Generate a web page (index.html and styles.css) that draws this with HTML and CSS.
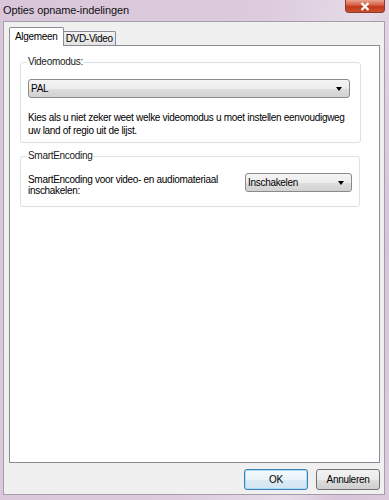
FILE: index.html
```html
<!DOCTYPE html>
<html lang="nl">
    <head>
        <meta charset="UTF-8" />
        <title>Opties opname-indelingen</title>
        <link rel="stylesheet" href="styles.css">
    </head>
    <body>
        <div class="window">
            <div class="titlebar">
                <span class="title">Opties opname-indelingen</span>
                <div class="close">
                    <svg width="12" height="9" viewBox="0 0 12 9">
                        <path d="M2.5 1 L9.5 8 M9.5 1 L2.5 8" stroke="#fff" stroke-width="2.2" />
                    </svg>
                </div>
            </div>
            <div class="dialog">
                <div class="tabs">
                    <div class="tab active">Algemeen</div>
                    <div class="tab">DVD-Video</div>
                </div>
                <div class="panel">
                    <fieldset class="group first">
                        <legend>Videomodus:</legend>
                        <div class="combo wide">
                            <span>PAL</span>
                            <span class="arrow"></span>
                        </div>
                        <p class="hint">Kies als u niet zeker weet welke videomodus u moet instellen eenvoudigweg uw land of regio uit de lijst.</p>
                    </fieldset>
                    <fieldset class="group second">
                        <legend>SmartEncoding</legend>
                        <div class="row">
                            <p class="label">SmartEncoding voor video- en audiomateriaal inschakelen:</p>
                            <div class="combo small">
                                <span>Inschakelen</span>
                                <span class="arrow"></span>
                            </div>
                        </div>
                    </fieldset>
                </div>
                <div class="buttons">
                    <button class="btn default">OK</button>
                    <button class="btn">Annuleren</button>
                </div>
            </div>
        </div>
    </body>
</html>
```

FILE: styles.css
```css
body {
    margin: 0;
    font-family: "Liberation Sans", Arial, sans-serif;
    font-size: 10px;
    letter-spacing: -0.3px;
    color: #000;
}

.window {
    width: 389px;
    height: 500px;
    box-sizing: border-box;
    padding: 0 4px 5px 3px;
    background: linear-gradient(100deg, #d9c6da 0%, #dccbdd 55%, #e6dbe8 78%, #d6c4d8 90%, #dccbdd 100%);
}

.titlebar {
    height: 21px;
    display: flex;
    justify-content: space-between;
    align-items: flex-start;
}

.title {
    font-size: 11px;
    letter-spacing: -0.1px;
    line-height: 14px;
    margin-top: 3px;
    color: #111;
}

.close {
    box-sizing: border-box;
    width: 40px;
    height: 13px;
    border: 1px solid #8a3b2c;
    border-top: none;
    border-radius: 0 0 4px 4px;
    background: linear-gradient(#eba491, #d35a3e 45%, #c23a1c 55%, #c9502e);
    display: flex;
    justify-content: center;
    align-items: center;
}

.dialog {
    box-sizing: border-box;
    height: 474px;
    background: #f0f0f0;
    border: 1px solid #a39ea8;
    padding: 5px 4px 4px 5px;
}

.tabs {
    display: flex;
    align-items: flex-end;
    height: 18px;
}

.tab {
    box-sizing: border-box;
    border: 1px solid #898c95;
    border-bottom: none;
    border-radius: 2px 2px 0 0;
    background: linear-gradient(#f3f3f3, #e2e2e2);
    padding: 0 2px;
    height: 14px;
    line-height: 13px;
    margin-left: -1px;
}

.tab.active {
    background: #fff;
    height: 19px;
    line-height: 17px;
    padding: 0 5px;
    margin-left: 0;
    margin-bottom: -1px;
    position: relative;
    z-index: 1;
}

.panel {
    box-sizing: border-box;
    background: #fff;
    border: 1px solid #898c95;
    height: 418px;
    padding: 10px 19px 0 10px;
}

.group {
    border: 1px solid #dde0e4;
    border-radius: 3px;
    margin: 0;
    padding: 0 7px;
}

.group legend {
    padding: 0 1px;
    margin-left: -1px;
    line-height: 12px;
    color: #1a1a1a;
}

.group.first {
    padding-bottom: 5px;
}

.group.second {
    margin-top: 7px;
    padding-bottom: 10px;
}

.combo {
    box-sizing: border-box;
    height: 19px;
    border: 1px solid #8a8a8a;
    border-radius: 3px;
    background: linear-gradient(#f5f5f5 0%, #ececec 50%, #dedede 51%, #d2d2d2 100%);
    display: flex;
    justify-content: space-between;
    align-items: center;
    padding: 0 7px 0 2px;
}

.arrow {
    width: 0;
    height: 0;
    border-left: 3.5px solid transparent;
    border-right: 3.5px solid transparent;
    border-top: 4px solid #000;
}

.combo.wide {
    margin-top: 11px;
    width: 322px;
}

.combo.small {
    width: 107px;
    flex-shrink: 0;
}

.hint {
    margin: 13px 0 0 0;
    line-height: 13px;
    width: 325px;
}

.row {
    display: flex;
    justify-content: space-between;
    align-items: flex-start;
    margin-top: 11px;
}

.label {
    margin: 1px 0 0 0;
    width: 205px;
    line-height: 11px;
}

.buttons {
    display: flex;
    justify-content: flex-end;
    gap: 8px;
    margin-top: 6px;
}

.btn {
    width: 64px;
    height: 21px;
    border: 1px solid #707070;
    border-radius: 3px;
    background: linear-gradient(#f2f2f2 0%, #ebebeb 50%, #dddddd 51%, #cfcfcf 100%);
    font-family: "Liberation Sans", Arial, sans-serif;
    font-size: 10px;
    letter-spacing: -0.3px;
    color: #000;
    padding: 0;
}

.btn.default {
    border-color: #3c7fb1;
    box-shadow: inset 0 0 0 1px #a9dcf7;
    background: linear-gradient(#f4f9fc 0%, #e9f3f9 50%, #dbeaf4 51%, #d2e5f1 100%);
}
```
